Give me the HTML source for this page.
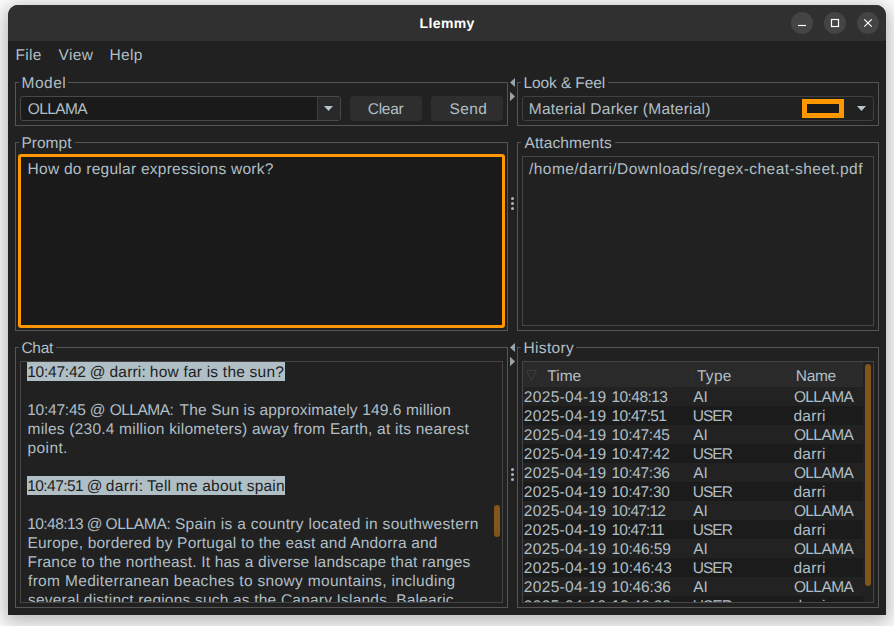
<!DOCTYPE html>
<html lang="en"><head><meta charset="utf-8"><title>Llemmy</title>
<style>
html,body{margin:0;padding:0}
body{width:894px;height:626px;overflow:hidden;background:#fbfbfb;position:relative;
 font-family:"Liberation Sans",sans-serif;font-size:15.5px;line-height:19px;color:#b0bec5;text-rendering:geometricPrecision}
#win{position:absolute;left:8px;top:5px;width:878px;height:610px;background:#212121;
 border-radius:10px 10px 0 0;box-shadow:0 4px 18px 3px rgba(0,0,0,.27)}
#tb{position:absolute;left:8px;top:5px;width:878px;height:36px;background:#303030;border-radius:10px 10px 0 0}
.t{position:absolute;white-space:pre;height:19px;margin-top:1px}
.grp{position:absolute;border:1px solid #555}
.gt{position:absolute;height:19px;background:#212121}
.box{position:absolute;box-sizing:border-box}
.wb{position:absolute;width:22px;height:22px;border-radius:11px;background:#444;top:12px}
.hl{position:absolute;background:#b0bec5;height:19px}
.dk{color:#1e1e1e}
.dot{position:absolute;width:3px;height:3px;border-radius:50%;background:#aab6bd;left:511px}
</style></head><body>
<div id="win"></div><div id="tb"></div>

<span id="title" class="t " style="left:419.50px;top:13px;letter-spacing:0.400px;font-weight:bold;font-size:14px;color:#fff;">Llemmy</span>
<div class="wb" style="left:791px"></div>
<div class="wb" style="left:824px"></div>
<div class="wb" style="left:857px"></div>
<svg class="box" style="left:791px;top:12px" width="99" height="22" viewBox="0 0 99 22" fill="none" stroke="#fff" stroke-width="1.2">
<path d="M7 13.5h8"/><rect x="40.5" y="7.5" width="7" height="7"/><path d="M73.3 7.3l7.4 7.4M80.7 7.3l-7.4 7.4"/></svg>
<span id="m1" class="t " style="left:15.50px;top:45px;letter-spacing:0.333px;">File</span>
<span id="m2" class="t " style="left:58.60px;top:45px;letter-spacing:0.333px;">View</span>
<span id="m3" class="t " style="left:109.50px;top:45px;letter-spacing:0.333px;">Help</span>
<div class="grp" style="left:15px;top:82px;width:491px;height:42px"></div><div class="gt" style="left:19px;top:73px;width:48.7px"></div><span id="g1" class="t " style="left:21.50px;top:73px;letter-spacing:0.500px;">Model</span>
<div class="grp" style="left:517px;top:82px;width:360px;height:42px"></div><div class="gt" style="left:521px;top:73px;width:86.5px"></div><span id="g2" class="t " style="left:523.50px;top:73px;letter-spacing:-0.100px;">Look &amp; Feel</span>
<div class="grp" style="left:15px;top:142px;width:491px;height:187px"></div><div class="gt" style="left:19px;top:133px;width:56.0px"></div><span id="g3" class="t " style="left:21.50px;top:133px;">Prompt</span>
<div class="grp" style="left:517px;top:142px;width:360px;height:187px"></div><div class="gt" style="left:521px;top:133px;width:94.0px"></div><span id="g4" class="t " style="left:524.50px;top:133px;letter-spacing:0.100px;">Attachments</span>
<div class="grp" style="left:15px;top:347px;width:491px;height:259px"></div><div class="gt" style="left:19px;top:338px;width:37.2px"></div><span id="g5" class="t " style="left:21.50px;top:338px;letter-spacing:-0.333px;">Chat</span>
<div class="grp" style="left:517px;top:347px;width:360px;height:259px"></div><div class="gt" style="left:521px;top:338px;width:55.4px"></div><span id="g6" class="t " style="left:523.50px;top:338px;letter-spacing:0.333px;">History</span>
<svg class="box" style="left:509px;top:76px" width="8" height="28" viewBox="0 0 8 28" fill="#98a4ab"><path d="M6 2v9L1 6.5z"/><path d="M1 15.8v9.4L6 20.5z"/></svg>
<svg class="box" style="left:509px;top:341px" width="8" height="28" viewBox="0 0 8 28" fill="#98a4ab"><path d="M6 2v9L1 6.5z"/><path d="M1 15.8v9.4L6 20.5z"/></svg>
<div class="dot" style="top:197px"></div>
<div class="dot" style="top:202px"></div>
<div class="dot" style="top:207px"></div>
<div class="dot" style="top:468px"></div>
<div class="dot" style="top:473px"></div>
<div class="dot" style="top:478px"></div>
<div class="box" style="left:20px;top:96px;width:321px;height:25px;border:1px solid #484848;border-radius:3px;background:#1a1a1a"></div>
<div class="box" style="left:317px;top:97px;width:23px;height:23px;border-left:1px solid #3f3f3f;background:#292929;border-radius:0 2px 2px 0"></div>
<svg class="box" style="left:323px;top:105px" width="11" height="7" viewBox="0 0 11 7"><path d="M1 1h9L5.5 6z" fill="#b9c5cb"/></svg>
<span id="c1" class="t " style="left:27.70px;top:99px;letter-spacing:-0.600px;">OLLAMA</span>
<div class="box" style="left:350px;top:96px;width:72px;height:25px;border-radius:4px;background:#2e2e2e"></div>
<div class="box" style="left:431px;top:96px;width:72px;height:25px;border-radius:4px;background:#2e2e2e"></div>
<span id="b1" class="t " style="left:367.70px;top:99px;letter-spacing:-0.250px;">Clear</span>
<span id="b2" class="t " style="left:449.60px;top:99px;letter-spacing:0.333px;">Send</span>
<div class="box" style="left:522px;top:96px;width:352px;height:25px;border:1px solid #404040;border-radius:3px"></div>
<span id="c2" class="t " style="left:528.75px;top:99px;letter-spacing:0.240px;">Material Darker (Material)</span>
<div class="box" style="left:802px;top:99px;width:42px;height:19px;border:5px solid #ff9800;background:#1a1a1a"></div>
<svg class="box" style="left:856px;top:105px" width="11" height="7" viewBox="0 0 11 7"><path d="M1 1h9L5.5 6z" fill="#b9c5cb"/></svg>
<div class="box" style="left:18px;top:154px;width:487px;height:174px;border:3px solid #ff9800;border-radius:3px;background:#1a1a1a"></div>
<span id="p1" class="t " style="left:27.60px;top:159px;letter-spacing:0.258px;">How do regular expressions work?</span>
<div class="box" style="left:522px;top:156px;width:352px;height:170px;border:1px solid #454545"></div>
<span id="a1" class="t " style="left:529.00px;top:159px;letter-spacing:0.452px;">/home/darri/Downloads/regex-cheat-sheet.pdf</span>
<div class="box" style="left:20px;top:361px;width:483px;height:242px;border:1px solid #454545"></div>
<div class="box" style="left:21px;top:362px;width:481px;height:240px;overflow:hidden">
<div class="hl" style="left:6px;top:0px;width:258px"></div>
<span id="ch0_0" class="t dk" style="left:6.20px;top:0px;letter-spacing:-0.222px;">10:47:42 @ </span>
<span id="ch0_1" class="t dk" style="left:88.50px;top:0px;letter-spacing:0.200px;">darri: </span>
<span id="ch0_2" class="t dk" style="left:128.80px;top:0px;letter-spacing:0.222px;">how far is the sun?</span>
<span id="ch1_0" class="t " style="left:6.20px;top:38px;letter-spacing:-0.222px;">10:47:45 @ </span>
<span id="ch1_1" class="t " style="left:88.70px;top:38px;letter-spacing:-0.500px;">OLLAMA: </span>
<span id="ch1_2" class="t " style="left:158.60px;top:38px;letter-spacing:0.135px;">The Sun is approximately 149.6 million</span>
<span id="ch2_0" class="t " style="left:6.50px;top:57px;letter-spacing:0.222px;">miles (230.4 million kilometers) away from Earth, at its nearest</span>
<span id="ch3_0" class="t " style="left:6.50px;top:76px;letter-spacing:0.400px;">point.</span>
<div class="hl" style="left:6px;top:114px;width:258px"></div>
<span id="ch4_0" class="t dk" style="left:6.20px;top:114px;letter-spacing:-0.556px;">10:47:51 @ </span>
<span id="ch4_1" class="t dk" style="left:84.70px;top:114px;letter-spacing:0.400px;">darri: </span>
<span id="ch4_2" class="t dk" style="left:126.10px;top:114px;letter-spacing:0.222px;">Tell me about spain</span>
<span id="ch5_0" class="t " style="left:6.20px;top:152px;letter-spacing:-0.556px;">10:48:13 @ </span>
<span id="ch5_1" class="t " style="left:84.50px;top:152px;letter-spacing:-0.333px;">OLLAMA: </span>
<span id="ch5_2" class="t " style="left:153.90px;top:152px;letter-spacing:0.317px;">Spain is a country located in southwestern</span>
<span id="ch6_0" class="t " style="left:6.50px;top:171px;letter-spacing:0.200px;">Europe, bordered by Portugal to the east and Andorra and</span>
<span id="ch7_0" class="t " style="left:6.50px;top:190px;letter-spacing:0.194px;">France to the northeast. It has a diverse landscape that ranges</span>
<span id="ch8_0" class="t " style="left:7.00px;top:209px;letter-spacing:0.327px;">from Mediterranean beaches to snowy mountains, including</span>
<span id="ch9_0" class="t " style="left:7.00px;top:228px;letter-spacing:0.200px;">several distinct regions such as the Canary Islands, Balearic</span>
</div>
<div class="box" style="left:494px;top:505px;width:6px;height:32px;border-radius:3px;background:#81561a"></div>
<div class="box" style="left:522px;top:361px;width:352px;height:242px;border:1px solid #454545"></div>
<div class="box" style="left:523px;top:362px;width:350px;height:240px;overflow:hidden">
<div class="box" style="left:0;top:0;width:340px;height:25px;background:#2a2a2a"></div>
<div class="box" style="left:169px;top:0;width:1px;height:25px;background:#2d2d2d"></div>
<div class="box" style="left:269px;top:0;width:1px;height:25px;background:#2d2d2d"></div>
<svg class="box" style="left:2px;top:7px" width="14" height="13" viewBox="0 0 14 13"><path d="M1.5 1.5h10L6.5 11.5z" fill="#2a2a2a" stroke="#3d3d3d" stroke-width="1"/></svg>
<span id="h1" class="t " style="left:24.30px;top:4px;">Time</span>
<span id="h2" class="t " style="left:173.90px;top:4px;letter-spacing:0.333px;">Type</span>
<span id="h3" class="t " style="left:272.80px;top:4px;letter-spacing:-0.333px;">Name</span>
<div class="box" style="left:0;top:25px;width:340px;height:19px;background:#222222"></div>
<span id="r0a" class="t " style="left:0.80px;top:25px;letter-spacing:0.333px;">2025-04-19 </span>
<span id="r0t" class="t " style="left:88.50px;top:25px;letter-spacing:-0.571px;">10:48:13</span>
<span id="r0b" class="t " style="left:170.20px;top:25px;">AI</span>
<span id="r0c" class="t " style="left:270.90px;top:25px;letter-spacing:-0.600px;">OLLAMA</span>
<div class="box" style="left:0;top:44px;width:340px;height:19px;background:#1b1b1b"></div>
<span id="r1a" class="t " style="left:0.80px;top:44px;letter-spacing:0.333px;">2025-04-19 </span>
<span id="r1t" class="t " style="left:88.50px;top:44px;letter-spacing:-0.714px;">10:47:51</span>
<span id="r1b" class="t " style="left:169.80px;top:44px;letter-spacing:-1.000px;">USER</span>
<span id="r1c" class="t " style="left:270.50px;top:44px;letter-spacing:0.250px;">darri</span>
<div class="box" style="left:0;top:63px;width:340px;height:19px;background:#222222"></div>
<span id="r2a" class="t " style="left:0.80px;top:63px;letter-spacing:0.333px;">2025-04-19 </span>
<span id="r2t" class="t " style="left:88.50px;top:63px;letter-spacing:-0.286px;">10:47:45</span>
<span id="r2b" class="t " style="left:170.20px;top:63px;">AI</span>
<span id="r2c" class="t " style="left:270.90px;top:63px;letter-spacing:-0.600px;">OLLAMA</span>
<div class="box" style="left:0;top:82px;width:340px;height:19px;background:#1b1b1b"></div>
<span id="r3a" class="t " style="left:0.80px;top:82px;letter-spacing:0.333px;">2025-04-19 </span>
<span id="r3t" class="t " style="left:88.50px;top:82px;letter-spacing:-0.286px;">10:47:42</span>
<span id="r3b" class="t " style="left:169.80px;top:82px;letter-spacing:-1.000px;">USER</span>
<span id="r3c" class="t " style="left:270.50px;top:82px;letter-spacing:0.250px;">darri</span>
<div class="box" style="left:0;top:101px;width:340px;height:19px;background:#222222"></div>
<span id="r4a" class="t " style="left:0.80px;top:101px;letter-spacing:0.333px;">2025-04-19 </span>
<span id="r4t" class="t " style="left:88.50px;top:101px;letter-spacing:-0.286px;">10:47:36</span>
<span id="r4b" class="t " style="left:170.20px;top:101px;">AI</span>
<span id="r4c" class="t " style="left:270.90px;top:101px;letter-spacing:-0.600px;">OLLAMA</span>
<div class="box" style="left:0;top:120px;width:340px;height:19px;background:#1b1b1b"></div>
<span id="r5a" class="t " style="left:0.80px;top:120px;letter-spacing:0.333px;">2025-04-19 </span>
<span id="r5t" class="t " style="left:88.50px;top:120px;letter-spacing:-0.286px;">10:47:30</span>
<span id="r5b" class="t " style="left:169.80px;top:120px;letter-spacing:-1.000px;">USER</span>
<span id="r5c" class="t " style="left:270.50px;top:120px;letter-spacing:0.250px;">darri</span>
<div class="box" style="left:0;top:139px;width:340px;height:19px;background:#222222"></div>
<span id="r6a" class="t " style="left:0.80px;top:139px;letter-spacing:0.333px;">2025-04-19 </span>
<span id="r6t" class="t " style="left:88.50px;top:139px;letter-spacing:-0.857px;">10:47:12</span>
<span id="r6b" class="t " style="left:170.20px;top:139px;">AI</span>
<span id="r6c" class="t " style="left:270.90px;top:139px;letter-spacing:-0.600px;">OLLAMA</span>
<div class="box" style="left:0;top:158px;width:340px;height:19px;background:#1b1b1b"></div>
<span id="r7a" class="t " style="left:0.80px;top:158px;letter-spacing:0.333px;">2025-04-19 </span>
<span id="r7t" class="t " style="left:88.50px;top:158px;letter-spacing:-0.857px;">10:47:11</span>
<span id="r7b" class="t " style="left:169.80px;top:158px;letter-spacing:-1.000px;">USER</span>
<span id="r7c" class="t " style="left:270.50px;top:158px;letter-spacing:0.250px;">darri</span>
<div class="box" style="left:0;top:177px;width:340px;height:19px;background:#222222"></div>
<span id="r8a" class="t " style="left:0.80px;top:177px;letter-spacing:0.333px;">2025-04-19 </span>
<span id="r8t" class="t " style="left:88.50px;top:177px;letter-spacing:-0.143px;">10:46:59</span>
<span id="r8b" class="t " style="left:170.20px;top:177px;">AI</span>
<span id="r8c" class="t " style="left:270.90px;top:177px;letter-spacing:-0.600px;">OLLAMA</span>
<div class="box" style="left:0;top:196px;width:340px;height:19px;background:#1b1b1b"></div>
<span id="r9a" class="t " style="left:0.80px;top:196px;letter-spacing:0.333px;">2025-04-19 </span>
<span id="r9t" class="t " style="left:88.50px;top:196px;">10:46:43</span>
<span id="r9b" class="t " style="left:169.80px;top:196px;letter-spacing:-1.000px;">USER</span>
<span id="r9c" class="t " style="left:270.50px;top:196px;letter-spacing:0.250px;">darri</span>
<div class="box" style="left:0;top:215px;width:340px;height:19px;background:#222222"></div>
<span id="r10a" class="t " style="left:0.80px;top:215px;letter-spacing:0.333px;">2025-04-19 </span>
<span id="r10t" class="t " style="left:88.50px;top:215px;letter-spacing:-0.143px;">10:46:36</span>
<span id="r10b" class="t " style="left:170.20px;top:215px;">AI</span>
<span id="r10c" class="t " style="left:270.90px;top:215px;letter-spacing:-0.600px;">OLLAMA</span>
<div class="box" style="left:0;top:234px;width:340px;height:19px;background:#1b1b1b"></div>
<span id="r11a" class="t " style="left:0.80px;top:234px;letter-spacing:0.333px;">2025-04-19 </span>
<span id="r11t" class="t " style="left:88.50px;top:234px;letter-spacing:-0.143px;">10:46:30</span>
<span id="r11b" class="t " style="left:169.80px;top:234px;letter-spacing:-1.000px;">USER</span>
<span id="r11c" class="t " style="left:270.50px;top:234px;letter-spacing:0.250px;">darri</span>
</div>
<div class="box" style="left:865px;top:364px;width:6px;height:222px;border-radius:3px;background:#81561a"></div>
</body></html>
